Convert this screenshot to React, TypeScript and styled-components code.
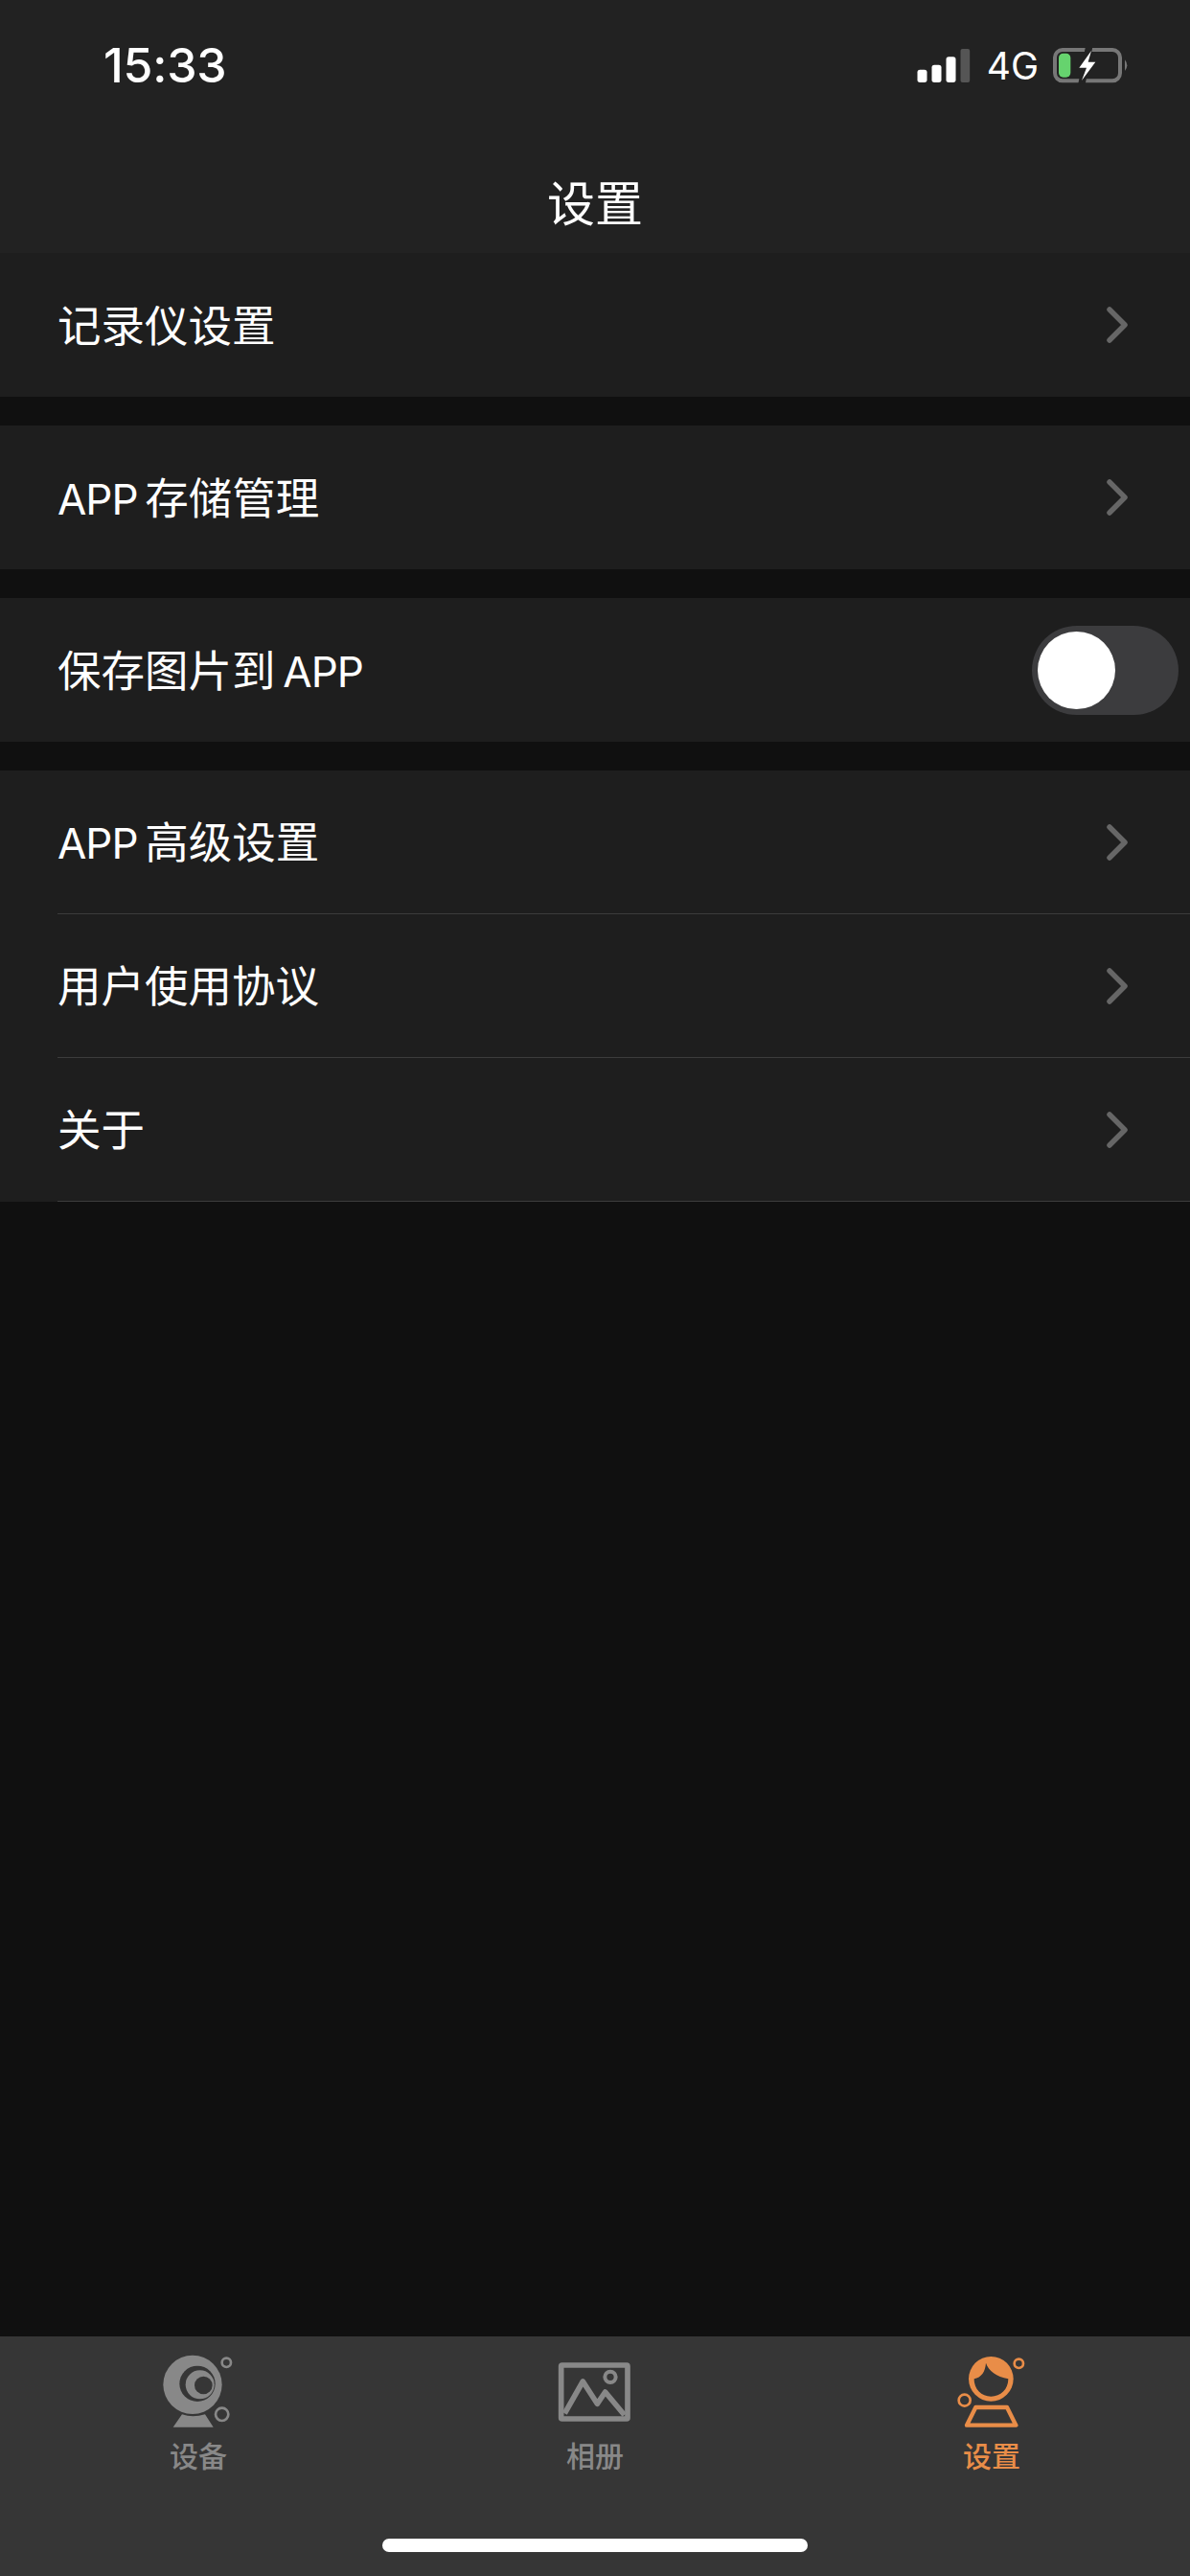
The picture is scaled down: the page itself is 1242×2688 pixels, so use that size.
import React from "react";

import styled, { createGlobalStyle } from "styled-components";

const GlobalStyle = createGlobalStyle`
  html, body {
    margin: 0;
    padding: 0;
    background: #101010;
  }
  * {
    box-sizing: border-box;
  }
`;

const SPage = styled.div`
  width: 1242px;
  height: 2688px;
  display: flex;
  flex-direction: column;
  background: #101010;
  font-family: "Inter", "Noto Sans CJK SC", sans-serif;
  overflow: hidden;
`;

const SHeader = styled.header`
  height: 264px;
  background: #222222;
  display: flex;
  flex-direction: column;
`;

const SStatusBar = styled.div`
  height: 136px;
  display: flex;
  align-items: center;
  justify-content: space-between;
  padding: 0 64px 0 108px;
`;

const STime = styled.div`
  font-weight: 500;
  font-size: 50px;
  letter-spacing: -0.2px;
  color: #ffffff;
`;

const SStatusIcons = styled.div`
  display: flex;
  align-items: center;
  gap: 17px;
`;

const SNetwork = styled.span`
  font-size: 39px;
  margin-right: -3px;
  color: #ffffff;
`;

const STitle = styled.h1`
  margin: 42px 0 0;
  text-align: center;
  font-size: 50px;
  font-weight: 400;
  line-height: 70px;
  color: #ffffff;
`;

const SGroup = styled.section`
  background: #1e1e1e;
  margin-bottom: 30px;
`;

const SRow = styled.div`
  height: 150px;
  padding-left: 60px;
  display: flex;
`;

const SRowInner = styled.div<{ $divider?: boolean }>`
  flex: 1;
  display: flex;
  align-items: center;
  justify-content: space-between;
  padding-right: 64px;
  border-bottom: ${(p) => (p.$divider ? "1.5px solid #3c3c3c" : "none")};
`;

const SRowLabel = styled.span`
  font-size: 45.5px;
  line-height: 60px;
  padding-top: 3px;
  word-spacing: -5px;
  font-weight: 400;
  color: #ffffff;
`;

const SLatin = styled.span`
  font-size: 44px;
  letter-spacing: -1px;
`;

const SToggle = styled.div`
  position: relative;
  width: 153px;
  height: 93px;
  margin-right: -52px;
  border-radius: 47px;
  background: #3c3c3e;
`;

const SKnob = styled.div`
  position: absolute;
  top: 6px;
  left: 6px;
  width: 81px;
  height: 81px;
  border-radius: 50%;
  background: #ffffff;
`;

const STabBar = styled.nav`
  margin-top: auto;
  height: 250px;
  background: #363636;
  display: flex;
  flex-direction: column;
`;

const STabs = styled.div`
  display: grid;
  grid-template-columns: repeat(3, 1fr);
  padding-top: 12px;
`;

const STab = styled.div<{ $active?: boolean }>`
  display: flex;
  flex-direction: column;
  align-items: center;
  gap: 3px;
  font-size: 30px;
  line-height: 40px;
  font-weight: 500;
  color: ${(p) => (p.$active ? "#e98d48" : "#888888")};
`;

const SHomeIndicator = styled.div`
  width: 444px;
  height: 14px;
  margin: 66px auto 0;
  border-radius: 7px;
  background: #ffffff;
`;

const SignalIcon = () => (
  <svg width="56" height="35" viewBox="115 90 165 105">
    <rect x="115" y="155" width="30" height="40" rx="8" fill="#fff" />
    <rect x="160" y="140" width="30" height="55" rx="8" fill="#fff" />
    <rect x="205" y="115" width="30" height="80" rx="8" fill="#fff" />
    <rect x="250" y="90" width="29" height="105" rx="6" fill="#555" />
  </svg>
);

const BatteryIcon = () => (
  <svg width="80" height="39" viewBox="532 85 240 117">
    <rect x="541" y="94" width="204" height="97" rx="24" fill="none" stroke="#777" strokeWidth="12" />
    <path d="M760 125 Q774 143 760 160 Z" fill="#777" />
    <rect x="553" y="105" width="37" height="75" rx="14" fill="#66d36e" />
    <path d="M648 84 L625 201" stroke="#222" strokeWidth="22" />
    <path d="M655 97 L617 150 L640 150 L625 190 L668 132 L645 132 Z" fill="#fff" />
  </svg>
);

const Chevron = () => (
  <svg width="24" height="38" viewBox="0 0 24 38" fill="none">
    <path d="M4 3 L20 19 L4 35" stroke="#666" strokeWidth="5.5" strokeLinecap="round" strokeLinejoin="round" />
  </svg>
);

const CameraIcon = () => (
  <svg width="140" height="90" viewBox="-9 60 420 270" fill="none">
    <circle cx="183" cy="175" r="92" fill="#888" />
    <circle cx="198" cy="172" r="56" fill="#363636" />
    <circle cx="206" cy="175" r="45" fill="#888" />
    <circle cx="217" cy="177" r="28" fill="#363636" />
    <path d="M122 308 L150 268 Q183 280 222 268 L248 308 Z" fill="#888" />
    <circle cx="289" cy="106" r="14" stroke="#888" strokeWidth="8" />
    <circle cx="275" cy="268" r="20" stroke="#888" strokeWidth="8" />
  </svg>
);

const AlbumIcon = () => (
  <svg width="140" height="90" viewBox="3 60 420 270" fill="none" stroke="#888">
    <rect x="107" y="114" width="208" height="168" rx="3" strokeWidth="17" />
    <path d="M118 265 L175 165 L220 235 L245 198 L305 270" strokeWidth="17" strokeLinejoin="round" />
    <circle cx="261" cy="151" r="17" strokeWidth="12" />
  </svg>
);

const PersonIcon = () => (
  <svg width="140" height="90" viewBox="0 60 420 270" fill="none">
    <circle cx="208" cy="157" r="70" fill="#e98d48" />
    <path
      d="M155 157 C178 152 190 135 192 107 C200 132 225 150 262 157 C262 190 238 212 208 212 C178 212 155 190 155 157 Z"
      fill="#363636"
    />
    <circle cx="295" cy="109" r="14" stroke="#e98d48" strokeWidth="8" />
    <circle cx="125" cy="224" r="18" stroke="#e98d48" strokeWidth="8" />
    <path d="M132 302 L160 246 H258 L286 302 Z" stroke="#e98d48" strokeWidth="13" strokeLinejoin="round" />
  </svg>
);

const App: React.FC = () => {
  return (
    <SPage>
      <GlobalStyle />
      <SHeader>
        <SStatusBar>
          <STime>15:33</STime>
          <SStatusIcons>
            <SignalIcon />
            <SNetwork>4G</SNetwork>
            <BatteryIcon />
          </SStatusIcons>
        </SStatusBar>
        <STitle>设置</STitle>
      </SHeader>

      <SGroup>
        <SRow>
          <SRowInner>
            <SRowLabel>记录仪设置</SRowLabel>
            <Chevron />
          </SRowInner>
        </SRow>
      </SGroup>

      <SGroup>
        <SRow>
          <SRowInner>
            <SRowLabel>
              <SLatin>APP</SLatin> 存储管理
            </SRowLabel>
            <Chevron />
          </SRowInner>
        </SRow>
      </SGroup>

      <SGroup>
        <SRow>
          <SRowInner>
            <SRowLabel>
              保存图片到 <SLatin>APP</SLatin>
            </SRowLabel>
            <SToggle>
              <SKnob />
            </SToggle>
          </SRowInner>
        </SRow>
      </SGroup>

      <SGroup>
        <SRow>
          <SRowInner $divider>
            <SRowLabel>
              <SLatin>APP</SLatin> 高级设置
            </SRowLabel>
            <Chevron />
          </SRowInner>
        </SRow>
        <SRow>
          <SRowInner $divider>
            <SRowLabel>用户使用协议</SRowLabel>
            <Chevron />
          </SRowInner>
        </SRow>
        <SRow>
          <SRowInner $divider>
            <SRowLabel>关于</SRowLabel>
            <Chevron />
          </SRowInner>
        </SRow>
      </SGroup>

      <STabBar>
        <STabs>
          <STab>
            <CameraIcon />
            设备
          </STab>
          <STab>
            <AlbumIcon />
            相册
          </STab>
          <STab $active>
            <PersonIcon />
            设置
          </STab>
        </STabs>
        <SHomeIndicator />
      </STabBar>
    </SPage>
  );
};

export default App;
